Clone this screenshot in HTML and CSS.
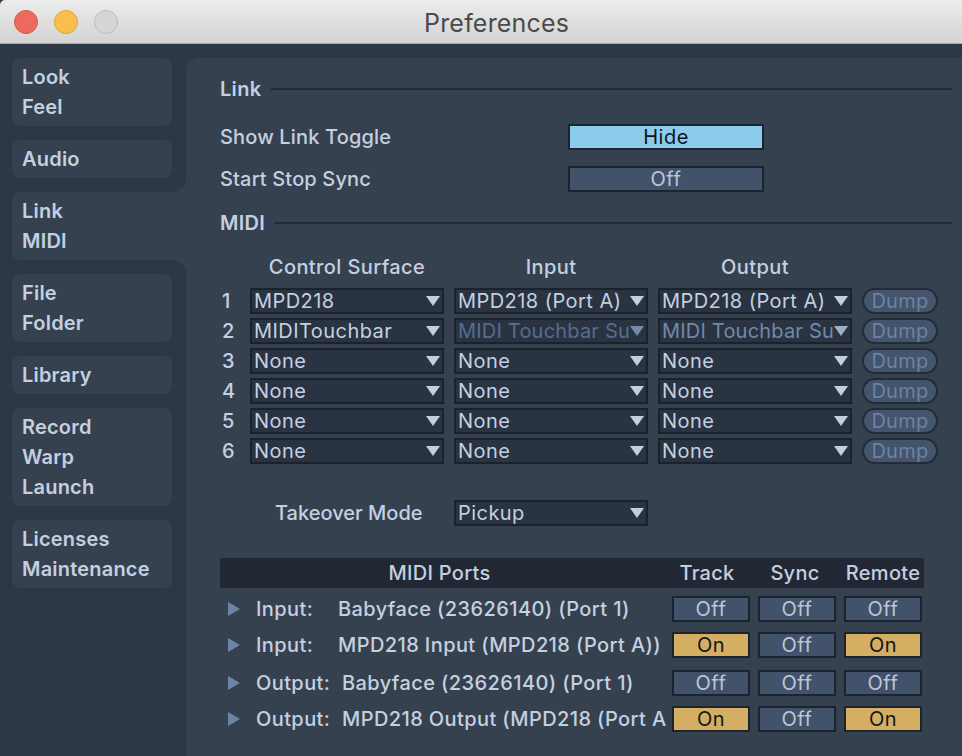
FILE: index.html
```html
<!DOCTYPE html>
<html lang="en">
<head>
    <meta charset="UTF-8">
    <title>Preferences</title>
    <link rel="stylesheet" href="styles.css">
</head>
<body>
    <header class="titlebar">
        <span class="light red"></span>
        <span class="light yellow"></span>
        <span class="light grey"></span>
        <span class="title">Preferences</span>
    </header>

    <div class="window">
        <nav class="sidebar">
            <div class="tab"><span>Look</span><span>Feel</span></div>
            <div class="tab"><span>Audio</span></div>
            <div class="tab selected"><span>Link</span><span>MIDI</span></div>
            <div class="tab"><span>File</span><span>Folder</span></div>
            <div class="tab"><span>Library</span></div>
            <div class="tab"><span>Record</span><span>Warp</span><span>Launch</span></div>
            <div class="tab"><span>Licenses</span><span>Maintenance</span></div>
        </nav>

        <main class="panel">
            <div class="section-head"><span>Link</span></div>
            <div class="setting first">
                <span class="setting-label">Show Link Toggle</span>
                <div class="btn wide blue">Hide</div>
            </div>
            <div class="setting">
                <span class="setting-label">Start Stop Sync</span>
                <div class="btn wide">Off</div>
            </div>

            <div class="section-head midi-head"><span>MIDI</span></div>
            <div class="surface-grid">
                <span></span>
                <span class="col-head">Control Surface</span>
                <span class="col-head">Input</span>
                <span class="col-head">Output</span>
                <span></span>

                <span class="num">1</span>
                <div class="select"><span class="select-text">MPD218</span><i class="arrow"></i></div>
                <div class="select"><span class="select-text">MPD218 (Port A)</span><i class="arrow"></i></div>
                <div class="select"><span class="select-text">MPD218 (Port A)</span><i class="arrow"></i></div>
                <div class="dump">Dump</div>

                <span class="num">2</span>
                <div class="select"><span class="select-text">MIDITouchbar</span><i class="arrow"></i></div>
                <div class="select dim"><span class="select-text">MIDI Touchbar Su</span><i class="arrow"></i></div>
                <div class="select dim bright"><span class="select-text">MIDI Touchbar Su</span><i class="arrow"></i></div>
                <div class="dump">Dump</div>

                <span class="num">3</span>
                <div class="select"><span class="select-text">None</span><i class="arrow"></i></div>
                <div class="select"><span class="select-text">None</span><i class="arrow"></i></div>
                <div class="select"><span class="select-text">None</span><i class="arrow"></i></div>
                <div class="dump">Dump</div>

                <span class="num">4</span>
                <div class="select"><span class="select-text">None</span><i class="arrow"></i></div>
                <div class="select"><span class="select-text">None</span><i class="arrow"></i></div>
                <div class="select"><span class="select-text">None</span><i class="arrow"></i></div>
                <div class="dump">Dump</div>

                <span class="num">5</span>
                <div class="select"><span class="select-text">None</span><i class="arrow"></i></div>
                <div class="select"><span class="select-text">None</span><i class="arrow"></i></div>
                <div class="select"><span class="select-text">None</span><i class="arrow"></i></div>
                <div class="dump">Dump</div>

                <span class="num">6</span>
                <div class="select"><span class="select-text">None</span><i class="arrow"></i></div>
                <div class="select"><span class="select-text">None</span><i class="arrow"></i></div>
                <div class="select"><span class="select-text">None</span><i class="arrow"></i></div>
                <div class="dump">Dump</div>
            </div>

            <div class="takeover">
                <span class="takeover-label">Takeover Mode</span>
                <div class="select"><span class="select-text">Pickup</span><i class="arrow"></i></div>
            </div>

            <div class="ports">
                <div class="ports-head">
                    <span class="ports-title">MIDI Ports</span>
                    <span class="ports-col">Track</span>
                    <span class="ports-col">Sync</span>
                    <span class="ports-col">Remote</span>
                </div>
                <div class="port">
                    <i class="expand"></i>
                    <span class="port-text"><span class="port-kind">Input:</span>Babyface (23626140) (Port 1)</span>
                    <div class="btn">Off</div><div class="btn">Off</div><div class="btn">Off</div>
                </div>
                <div class="port">
                    <i class="expand"></i>
                    <span class="port-text"><span class="port-kind">Input:</span>MPD218 Input (MPD218 (Port A))</span>
                    <div class="btn on">On</div><div class="btn">Off</div><div class="btn on">On</div>
                </div>
                <div class="port spaced">
                    <i class="expand"></i>
                    <span class="port-text"><span class="port-kind out">Output:</span>Babyface (23626140) (Port 1)</span>
                    <div class="btn">Off</div><div class="btn">Off</div><div class="btn">Off</div>
                </div>
                <div class="port">
                    <i class="expand"></i>
                    <span class="port-text"><span class="port-kind out">Output:</span>MPD218 Output (MPD218 (Port A))</span>
                    <div class="btn on">On</div><div class="btn">Off</div><div class="btn on">On</div>
                </div>
            </div>
        </main>
    </div>
</body>
</html>
```

FILE: styles.css
```css
* {
    box-sizing: border-box;
}
html, body {
    height: 100%;
}
body {
    margin: 0;
    overflow: hidden;
    background-color: #2d3846;
    color: #c4d0e0;
    font-family: Inter, "Noto Sans", sans-serif;
    font-size: 20px;
    letter-spacing: 0.3px;
}

/* title bar */
.titlebar {
    display: flex;
    align-items: center;
    gap: 16px;
    height: 44px;
    padding-left: 14px;
    background: linear-gradient(#ececec, #d3d3d3);
    border-bottom: 1px solid #a9a9a9;
    border-top-left-radius: 5px;
}
.light {
    width: 24px;
    height: 24px;
    border-radius: 50%;
    border: 1px solid;
}
.red {
    background-color: #ee6a5f;
    border-color: #d8574d;
}
.yellow {
    background-color: #f8bf4c;
    border-color: #dea43a;
}
.grey {
    background-color: #d6d6d6;
    border-color: #bcbcbc;
}
.title {
    margin-left: 290px;
    padding-top: 3px;
    color: #4b4b4b;
    font-size: 25px;
    letter-spacing: 0.2px;
}

/* sidebar + panel */
.window {
    display: flex;
    height: 712px;
}
.sidebar {
    display: flex;
    flex-direction: column;
    gap: 14px;
    width: 186px;
    padding: 14px 14px 0 12px;
}
.tab {
    display: flex;
    flex-direction: column;
    padding: 4px 10px;
    background-color: #364150;
    border-radius: 8px;
    font-weight: 600;
    letter-spacing: 0.2px;
}
.tab span {
    height: 30px;
    line-height: 31px;
}
.tab.selected {
    position: relative;
    margin-right: -14px;
    border-radius: 8px 0 0 8px;
}
.tab.selected::before,
.tab.selected::after {
    content: "";
    position: absolute;
    right: 0;
    width: 14px;
    height: 14px;
}
.tab.selected::before {
    top: -14px;
    background: radial-gradient(circle at 0 0, #2d3846 14px, #364150 14.5px);
}
.tab.selected::after {
    bottom: -14px;
    background: radial-gradient(circle at 0 100%, #2d3846 14px, #364150 14.5px);
}
.panel {
    flex: 1;
    margin-top: 14px;
    padding: 18px 10px 0 34px;
    background-color: #364150;
    border-top-left-radius: 14px;
}

.section-head {
    display: flex;
    align-items: center;
    gap: 10px;
    height: 26px;
    font-weight: 600;
}
.section-head::after {
    content: "";
    flex: 1;
    height: 2px;
    background-color: #232b36;
}
.midi-head {
    margin-top: 18px;
}
.setting {
    display: flex;
    align-items: center;
    margin-top: 16px;
}
.setting.first {
    margin-top: 22px;
}
.setting-label {
    width: 348px;
    font-weight: 500;
    letter-spacing: 0.15px;
}

/* toggle buttons */
.btn {
    flex: none;
    width: 78px;
    height: 26px;
    background-color: #42526a;
    border: 2px solid #1c242f;
    color: #bcc7d6;
    letter-spacing: 0.5px;
    line-height: 23px;
    text-align: center;
}
.btn.wide {
    width: 196px;
}
.btn.blue {
    background-color: #8ccbec;
    color: #10151b;
}
.btn.on {
    background-color: #d4ae62;
    color: #10151b;
}

/* control surface table */
.surface-grid {
    display: grid;
    grid-template-columns: 20px 194px 194px 194px 76px;
    grid-template-rows: 30px;
    grid-auto-rows: 26px;
    column-gap: 10px;
    row-gap: 4px;
    margin-top: 18px;
}
.col-head {
    font-weight: 500;
    letter-spacing: 0.4px;
    line-height: 27px;
    text-align: center;
}
.num {
    padding-left: 2px;
    line-height: 26px;
    font-weight: 500;
}
.select {
    display: flex;
    align-items: center;
    justify-content: space-between;
    width: 194px;
    height: 26px;
    padding: 0 2px 0 2px;
    background-color: #2a3341;
    border: 2px solid #1b222c;
}
.select-text {
    overflow: hidden;
    white-space: nowrap;
    letter-spacing: 0.45px;
}
.arrow {
    flex: none;
    width: 0;
    height: 0;
    border-left: 7px solid transparent;
    border-right: 7px solid transparent;
    border-top: 10px solid #c5cedb;
}
.select.dim .select-text {
    color: #566d90;
    letter-spacing: 0.2px;
}
.select.dim .arrow {
    border-top-color: #7389a8;
}
.select.dim.bright .select-text {
    color: #7389a8;
}
.select.dim.bright .arrow {
    border-top-color: #9fb0c6;
}
.dump {
    height: 26px;
    background-color: #43546c;
    border: 2px solid #222b37;
    border-radius: 13px;
    color: #6c82a1;
    line-height: 23px;
    text-align: center;
}

.takeover {
    display: flex;
    align-items: center;
    margin-top: 36px;
}
.takeover-label {
    width: 234px;
    padding-left: 55px;
    font-weight: 500;
    letter-spacing: 0;
}

/* midi ports */
.ports {
    width: 704px;
    margin-top: 32px;
}
.ports-head {
    display: flex;
    align-items: center;
    height: 30px;
    background-color: #212833;
    font-weight: 500;
}
.ports-title {
    flex: none;
    width: 439px;
    margin-right: 4px;
    text-align: center;
}
.ports-col {
    flex: none;
    width: 88px;
    text-align: center;
}
.port {
    display: flex;
    align-items: center;
    gap: 8px;
    margin-top: 10px;
}
.ports-head + .port {
    margin-top: 8px;
}
.port.spaced {
    margin-top: 12px;
}
.expand {
    flex: none;
    width: 0;
    height: 0;
    margin-left: 8px;
    border-top: 7px solid transparent;
    border-bottom: 7px solid transparent;
    border-left: 12px solid #6c84a6;
}
.port-text {
    width: 410px;
    margin-left: 8px;
    margin-right: -2px;
    overflow: hidden;
    white-space: nowrap;
    font-weight: 500;
    letter-spacing: 0.4px;
}
.port-kind {
    display: inline-block;
    width: 82px;
}
.port-kind.out {
    width: 86px;
}
```
